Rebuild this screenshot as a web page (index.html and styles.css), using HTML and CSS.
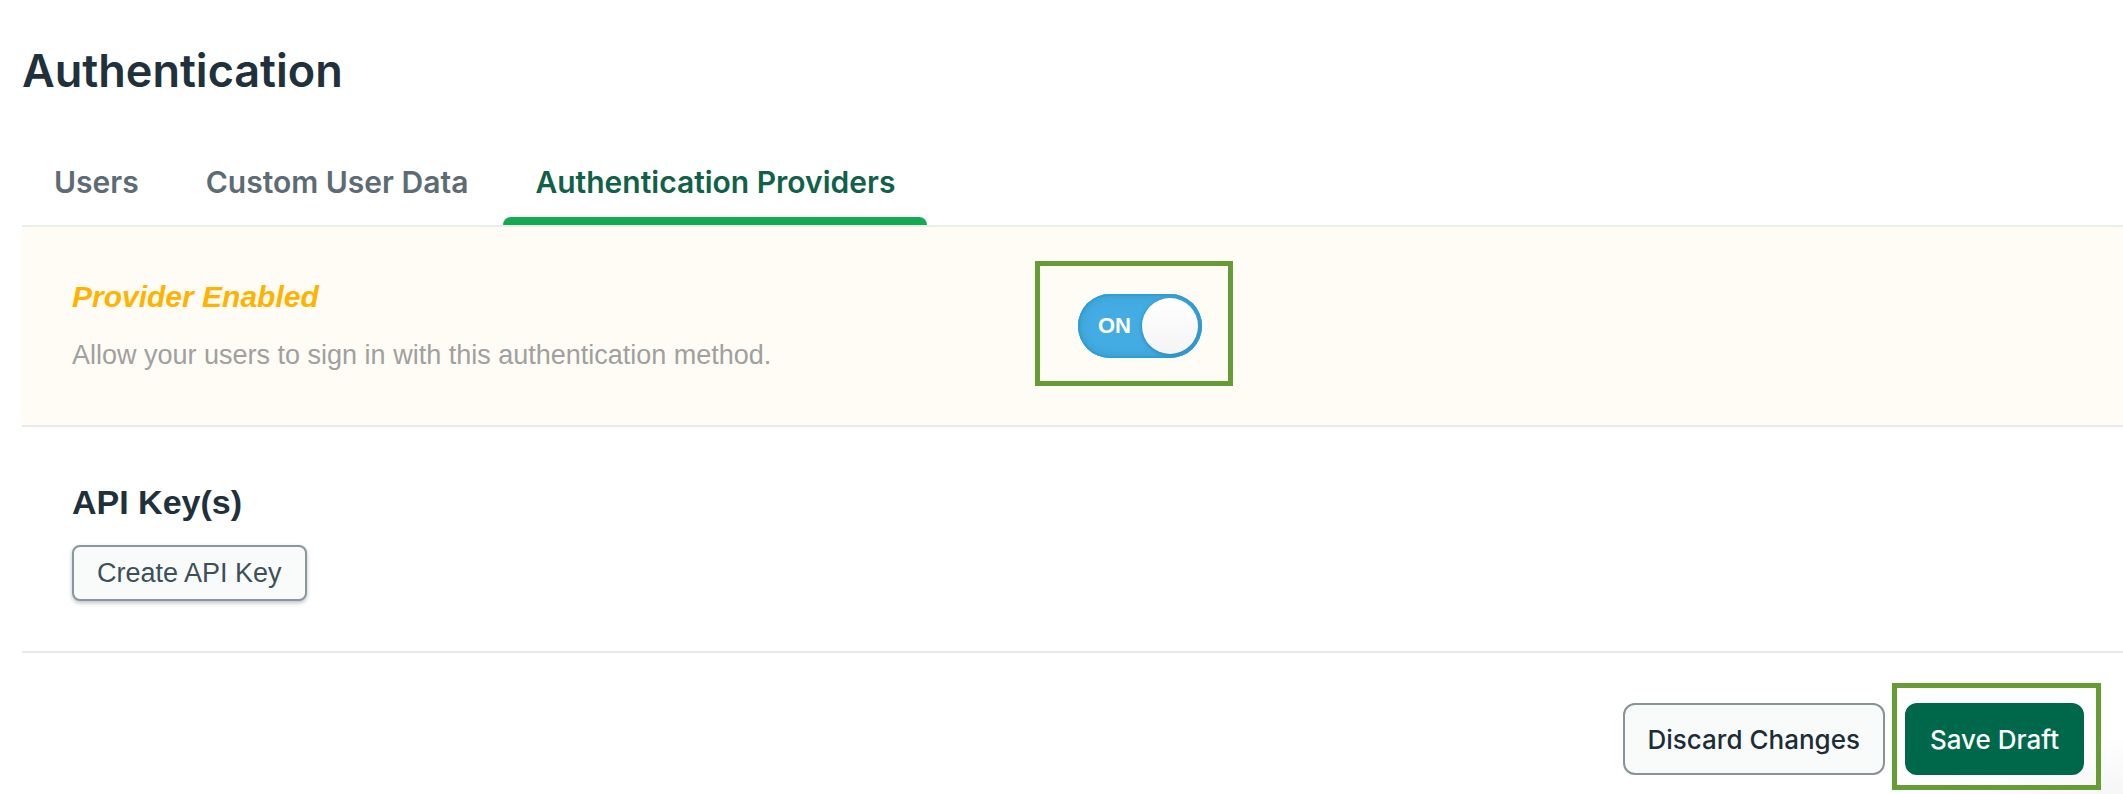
FILE: index.html
```html
<!DOCTYPE html>
<html lang="en">
<head>
<meta charset="utf-8">
<meta name="viewport" content="width=device-width, initial-scale=1">
<title>Authentication</title>
<link rel="stylesheet" href="styles.css">
</head>
<body>
<main class="page">
  <h1 class="page-title">Authentication</h1>
  <nav class="tabs" aria-label="Authentication sections">
    <a class="tab" href="#users">Users</a>
    <a class="tab" href="#custom-data">Custom User Data</a>
    <a class="tab tab-active" href="#providers" aria-current="page">Authentication Providers</a>
  </nav>
  <section class="provider">
    <div class="provider-text">
      <h2 class="provider-title">Provider Enabled</h2>
      <p class="provider-help" id="provider-help">Allow your users to sign in with this authentication method.</p>
    </div>
    <div class="highlight highlight-toggle">
      <label class="toggle">
        <input class="toggle-input" type="checkbox" role="switch" aria-label="Provider Enabled" aria-describedby="provider-help" checked>
        <span class="toggle-text">ON</span>
        <span class="toggle-knob"></span>
      </label>
    </div>
  </section>
  <section class="keys">
    <h2 class="keys-title">API Key(s)</h2>
    <button class="create-button" type="button">Create API Key</button>
  </section>
  <footer class="actions">
    <button class="action discard" type="button">Discard Changes</button>
    <div class="highlight highlight-save">
      <button class="action save" type="button">Save Draft</button>
    </div>
  </footer>
</main>
</body>
</html>
```
FILE: styles.css
```css
* {
  box-sizing: border-box;
}

body {
  margin: 0;
  background: #fff;
  color: #21313c;
  font-family: "Liberation Sans", Arial, sans-serif;
}

h1,
h2,
p {
  margin: 0;
}

button {
  font-family: inherit;
  cursor: pointer;
}

.page {
  padding: 43px 0 4px 22px;
  background: radial-gradient(ellipse 180px 60px at 100% 100%, #f6f6f6, #fff);
}

.page-title {
  font-family: Inter, sans-serif;
  font-size: 45px;
  font-weight: 600;
  line-height: 56px;
}

.tabs {
  display: flex;
  gap: 3px;
  margin-top: 40px;
  border-bottom: 2px solid #e7eeec;
}

.tab {
  padding: 23px 32px 15px;
  border-bottom: 8px solid transparent;
  color: #5d6c74;
  font-family: Inter, sans-serif;
  font-size: 30px;
  font-weight: 600;
  line-height: 40px;
  text-decoration: none;
  white-space: nowrap;
}

.tab-active {
  position: relative;
  color: #116149;
}

.tab-active::after {
  content: "";
  position: absolute;
  right: 0;
  bottom: -8px;
  left: 0;
  height: 8px;
  border-radius: 8px 8px 0 0;
  background: #13aa52;
}

.provider {
  display: grid;
  grid-template-columns: 963px 1fr;
  align-items: start;
  padding: 34px 0 39px 50px;
  border-bottom: 2px solid #e8e9eb;
  background: #fffcf5;
}

.provider-text {
  padding-top: 16px;
}

.provider-title {
  color: #ffb300;
  font-size: 30px;
  font-style: italic;
  line-height: 40px;
}

.provider-help {
  margin-top: 20px;
  color: #a0a0a0;
  font-size: 27px;
  line-height: 36px;
}

.highlight {
  border: 5px solid #669c35;
}

.highlight-toggle {
  justify-self: start;
  padding: 28px 26px 23px 38px;
}

.toggle {
  position: relative;
  display: flex;
  align-items: center;
  justify-content: space-between;
  width: 124px;
  height: 64px;
  padding: 0 4px 0 20px;
  border-radius: 32px;
  background: #43ade3;
  box-shadow: inset 0 0 0 2px #309ed5, inset 0 0 12px #3794c4;
  cursor: pointer;
}

.toggle-input {
  position: absolute;
  inset: 0;
  width: 100%;
  height: 100%;
  margin: 0;
  opacity: 0;
}

.toggle-text {
  color: #fff;
  font-size: 22px;
  font-weight: bold;
  line-height: 24px;
}

.toggle-knob {
  width: 56px;
  height: 56px;
  border-radius: 50%;
  background: linear-gradient(#fff, #f4f4f4);
  box-shadow: 0 1px 4px #2480b0;
}

.keys {
  display: flex;
  flex-direction: column;
  align-items: flex-start;
  padding: 53px 50px 50px;
  border-bottom: 2px solid #e9e9e9;
}

.keys-title {
  font-size: 34px;
  line-height: 44px;
}

.create-button {
  height: 56px;
  margin-top: 21px;
  padding: 0 23px;
  border: 2px solid #89979b;
  border-radius: 8px;
  background: #f9fbfa;
  box-shadow: 0 2px 4px #bcc3c8;
  color: #3d4f58;
  font-size: 27px;
}

.actions {
  display: flex;
  align-items: flex-start;
  justify-content: flex-end;
  gap: 7px;
  padding: 30px 22px 0 0;
}

.action {
  height: 72px;
  padding: 0 23px;
  border: 2px solid #889397;
  border-radius: 12px;
  font-family: Inter, sans-serif;
  font-size: 26px;
  font-weight: 500;
}

.discard {
  margin-top: 20px;
  background: #f9fbfa;
  color: #1c2d38;
}

.highlight-save {
  padding: 15px 12px 10px 8px;
}

.save {
  display: block;
  border-color: #00684a;
  background: #00684a;
  color: #fff;
}
```
